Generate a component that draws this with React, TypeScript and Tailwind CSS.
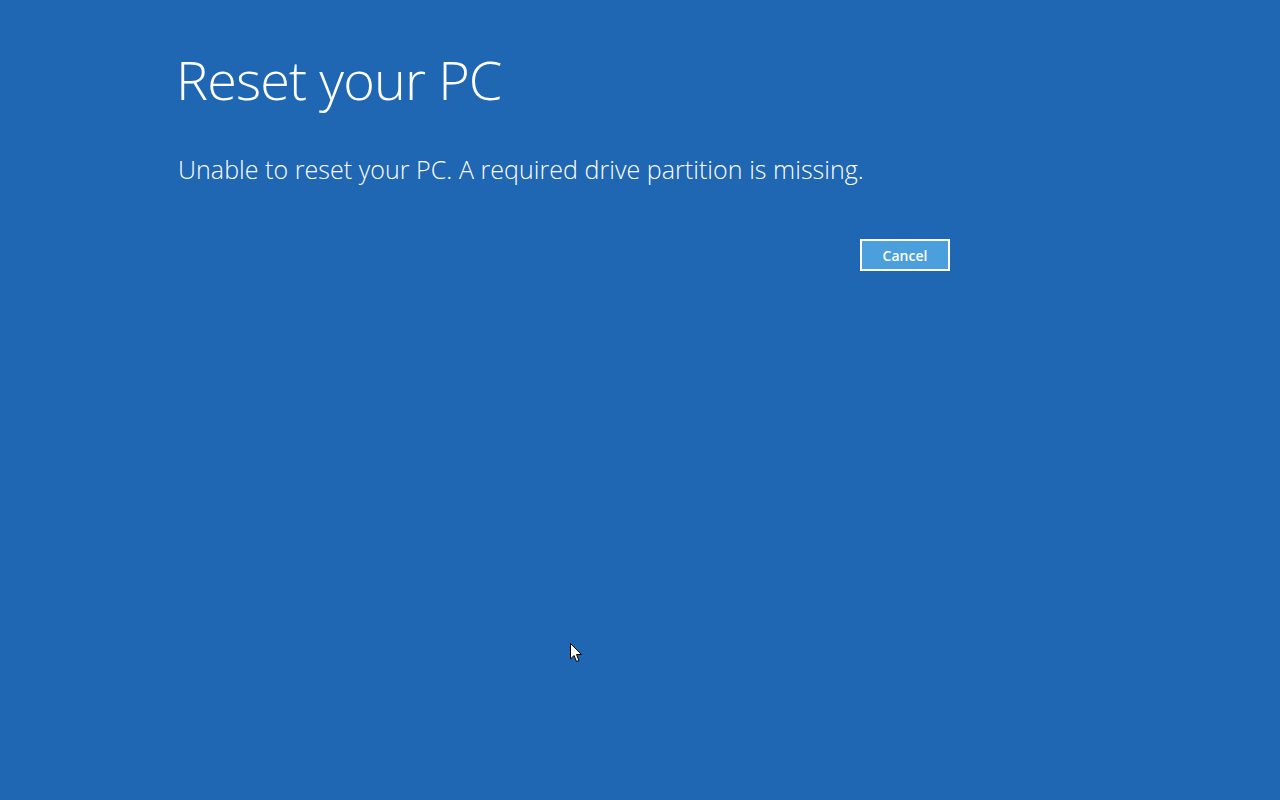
export default function App() {
  return (
    <div className="relative w-[1280px] h-[800px] bg-[#1f66b3] text-white overflow-hidden" style={{ fontFamily: '"Open Sans", "Noto Sans", sans-serif' }}>
      <div className="pl-[176px] pt-[44px] w-[950px]">
        <h1 className="text-[54px] font-light leading-[70px] tracking-[-0.9px]">Reset your PC</h1>
        <p className="mt-[38px] ml-[2px] text-[25px] font-light leading-[34px] tracking-[0.05px]">Unable to reset your PC. A required drive partition is missing.</p>
        <div className="flex justify-end mt-[53px]">
          <button className="w-[90px] h-[32px] border-2 border-white bg-[#4a9fdc] text-[14px] font-semibold text-white">Cancel</button>
        </div>
      </div>
      <svg className="absolute left-[570px] top-[643px]" width="13" height="20" viewBox="0 0 13 20">
        <path d="M0.5 0.5 L0.5 16 L4 12.5 L6.5 18.5 L9 17.5 L6.5 11.5 L11.5 11.5 Z" fill="white" stroke="black" strokeWidth="1" />
      </svg>
    </div>
  );
}
